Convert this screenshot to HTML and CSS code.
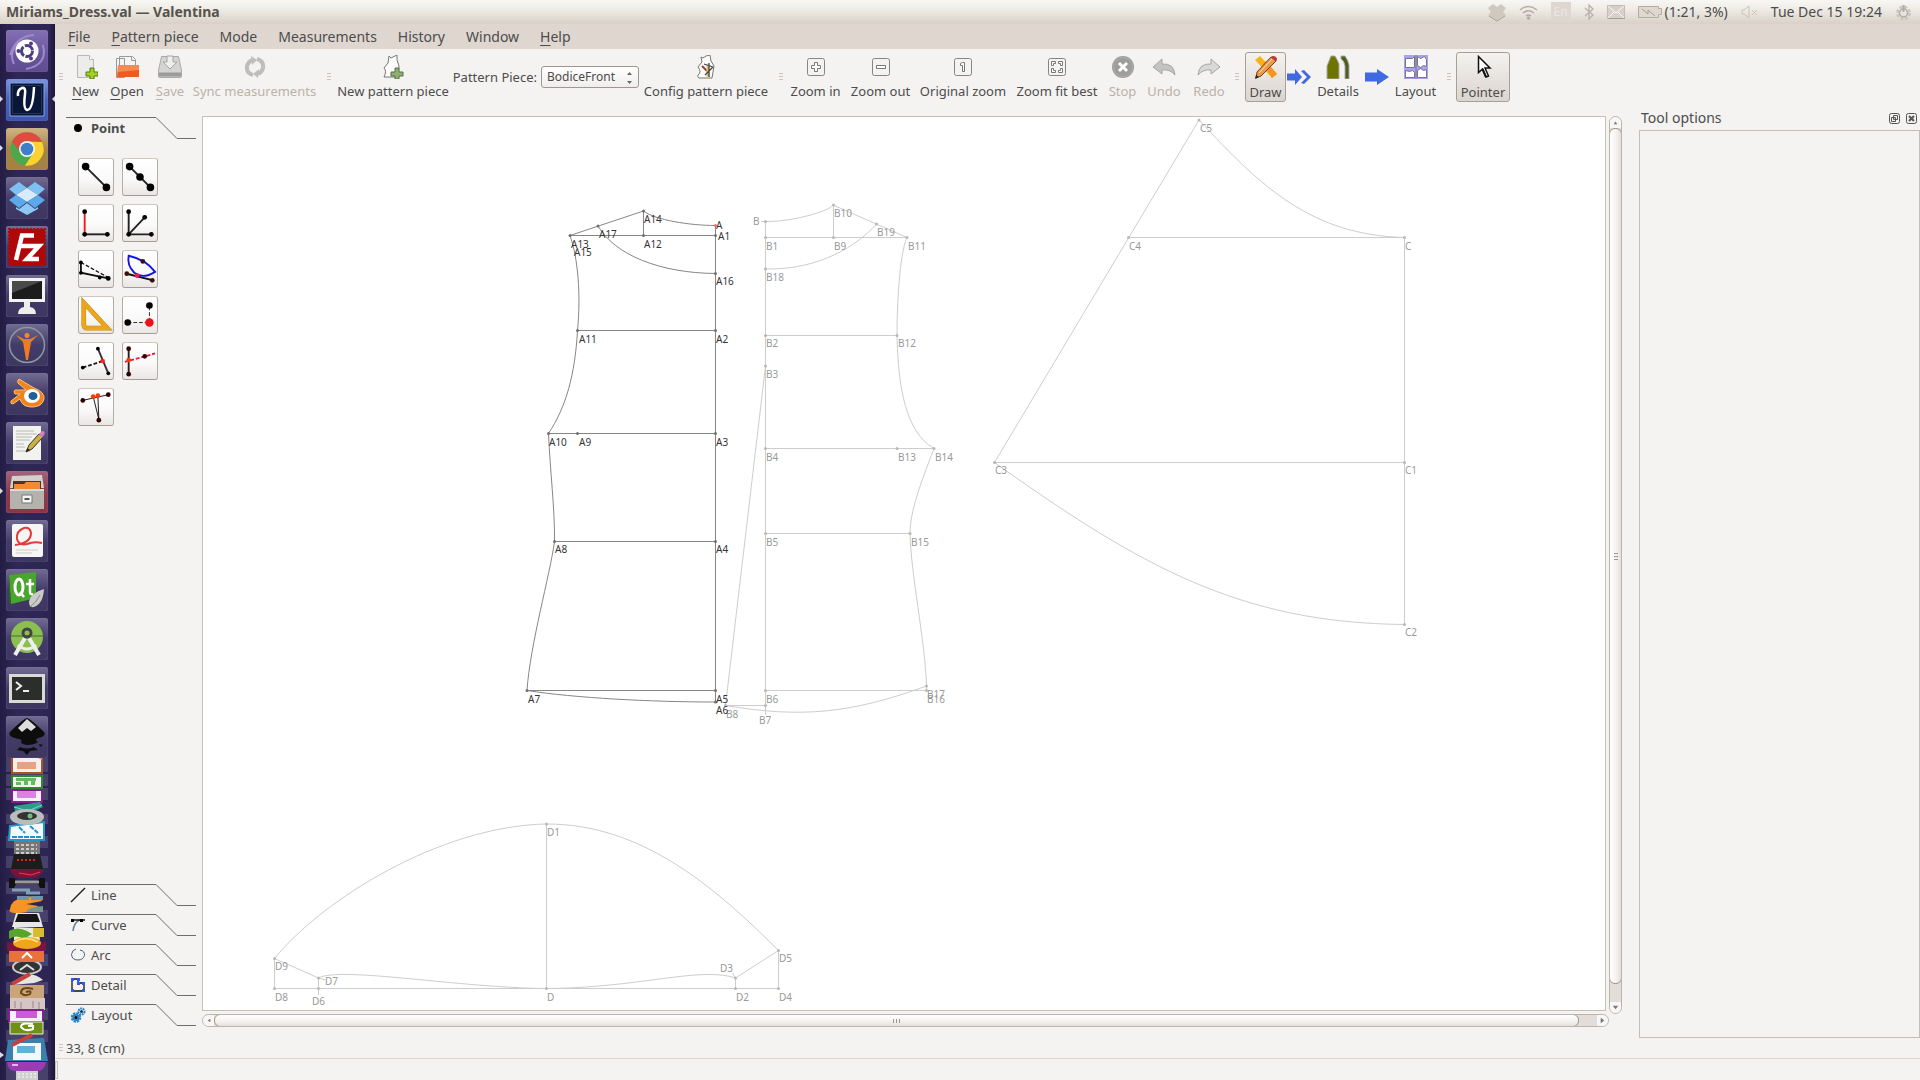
FILE: index.html
```html
<!DOCTYPE html>
<html lang="en">
<head>
<meta charset="utf-8">
<title>Miriams_Dress.val — Valentina</title>
<link rel="stylesheet" href="styles.css">
</head>
<body>
<header class="panel">
  <h1 class="panel-title">Miriams_Dress.val — Valentina</h1>
  <div class="tray">
    <svg width="18" height="20" viewBox="0 0 18 20"><path d="M5 2L0 6l3 4-3 3 6 3 3 3 3-3 6-3-3-3 3-4-5-4-4 3z" fill="#cfc9c0"/><path d="M1 14l8 5 8-5" fill="none" stroke="#a59d93"/></svg>
    <svg width="19" height="16" viewBox="0 0 19 16" fill="none" stroke="#b3aca3" stroke-width="1.5"><path d="M1 6q8.500-7 17 0M4 9q5.500-4.500 11 0M7 12q2.500-2 5 0"/><circle cx="9.500" cy="14" r="1"/></svg>
    <span class="lang">En</span>
    <svg width="10" height="18" viewBox="0 0 10 18" fill="none" stroke="#b8b1a8" stroke-width="1.300"><path d="M1 5l8 7-4 4V2l4 4-8 7"/></svg>
    <svg width="18" height="14" viewBox="0 0 18 14"><path d="M.5.5h17v13H.5z" fill="#d6d0c8" stroke="#c2bbb2"/><path d="M1 1l8 7 8-7M1 13l6-6M17 13l-6-6" fill="none" stroke="#fbfaf8"/><path d="M1 13.500h17" stroke="#a59d93"/></svg>
    <span class="battery"><svg width="24" height="14" viewBox="0 0 24 14"><path d="M.5 1.500h20v2h3v6h-3v3H.5z" fill="#ddd8d0" stroke="#b3aca3"/><path d="M4 4l6 5V5l7 6" fill="none" stroke="#a59d93"/></svg>(1:21, 3%)</span>
    <svg width="17" height="14" viewBox="0 0 17 14" fill="none" stroke="#cbc4bb"><path d="M1 5h2l5-4v12l-5-4H1zM11 5l5 5M16 5l-5 5"/></svg>
    <span class="clock">Tue Dec 15 19:24</span>
    <svg width="17" height="17" viewBox="0 0 17 17" fill="none" stroke="#b3aca3" stroke-width="1.500"><circle cx="8.500" cy="9" r="6" stroke-dasharray="3 1.700" stroke-width="3" stroke="#cdc7be"/><circle cx="8.500" cy="9" r="4"/><path d="M8.500 1v7" stroke-width="2"/></svg>
  </div>
</header>

<div class="desktop">
<nav class="launcher" aria-label="Launcher">
  <button class="tile purple" aria-label="Dash"><svg viewBox="0 0 42 42"><path d="M4 25Q10 6 28 5M8 34Q2 22 14 12M37 15Q42 35 20 39" fill="none" stroke="#9d8cc8" stroke-width="2"/><circle cx="21" cy="21" r="11.500" fill="#fff"/><circle cx="21" cy="21" r="5.500" fill="none" stroke="#4f3f82" stroke-width="3" stroke-dasharray="10 1.500"/><g fill="#4f3f82"><circle cx="12.500" cy="21" r="2"/><circle cx="25" cy="13.500" r="2"/><circle cx="25" cy="28.500" r="2"/></g></svg></button>
  <button class="tile blue run" aria-label="Valentina"><svg viewBox="0 0 42 42"><path d="M4 4h34v33H4z" fill="#0a1638" stroke="#8ba2d8"/><path d="M6.500 6.500h29v28h-29z" fill="none" stroke="#36507a" stroke-dasharray="1 1"/><path d="M12 17q-1-6 4-8 4-1 3 6-2 15 2 16 6 0 7-23" fill="none" stroke="#fff" stroke-width="2.500"/></svg></button>
  <button class="tile sand" aria-label="Chrome"><svg viewBox="0 0 42 42"><circle cx="21" cy="21" r="16.500" fill="#4ca84c"/><path d="M6 14A16.500 16.500 0 0 1 36 14L21 13.500 14.500 24z" fill="#e04b3f"/><path d="M36 14A16.500 16.500 0 0 1 19 37.500L28 24 21 13.500z" fill="#fcd22e"/><circle cx="21" cy="21" r="8" fill="#f3f3f3"/><circle cx="21" cy="21" r="6.300" fill="#3f7fc8"/></svg></button>
  <button class="tile" aria-label="Dropbox"><svg viewBox="0 0 42 42"><path d="M13 5l8 6-11 7-7-6zM29 5l-8 6 11 7 7-6z" fill="#7dc0f4"/><path d="M10 18l11-7 11 7-11 7z" fill="#d6ecfc"/><path d="M3 23l7-5 11 7-8 6zM39 23l-7-5-11 7 8 6z" fill="#5aa9ea"/><path d="M10 30l3 2 8-6 8 6 3-2v2l-11 6-11-6z" fill="#8cc8f5"/></svg></button>
  <button class="tile" aria-label="FileZilla"><svg viewBox="0 0 42 42"><path d="M3 3h36v36H3z" fill="#b00808" stroke="#b00808" stroke-width="2" stroke-dasharray="2 1.500"/><path d="M28 9.500H16L10 34M13 20h11M21 20h12L21 33h12" fill="none" stroke="#fff" stroke-width="4.500"/></svg></button>
  <button class="tile" aria-label="Remote desktop"><svg viewBox="0 0 42 42"><path d="M3 3h36v24H3z" fill="#f3f3f3"/><path d="M6 6h30v18H6z" fill="#1c1c1c"/><path d="M6 6h30L6 18z" fill="#4a4a4a"/><path d="M18 27h6v5q6 1 6 7H12q0-6 6-7z" fill="#eee"/></svg></button>
  <button class="tile" aria-label="MakeHuman"><svg viewBox="0 0 42 42"><circle cx="21" cy="21" r="17.500" fill="none" stroke="#8d97a0" stroke-width="1.500"/><circle cx="21" cy="11.500" r="2.500" fill="#f28a2c"/><path d="M10 11l8 4h6l8-4-7 7-1 6-2 12h-2l-2-12-1-6z" fill="#ee7b22"/></svg></button>
  <button class="tile" aria-label="Blender"><svg viewBox="0 0 42 42"><path d="M13 6l15 9q11 4 10 11-2 8-12 8-10 0-12-8l-7 5q-3 0-2-3l9-7H9q-2-2 0-4h11l-8-7q-1-3 1-4z" fill="#ee8420" stroke="#ffc078"/><ellipse cx="26" cy="23" rx="8" ry="7" fill="#fff"/><ellipse cx="27" cy="23" rx="4.500" ry="4" fill="#205d9c"/></svg></button>
  <button class="tile" aria-label="Text Editor"><svg viewBox="0 0 42 42"><path d="M7 4h28v34H7z" fill="#f2f2ef"/><path d="M10 9h18M10 12h21M10 15h16M10 18h14M10 22h8M10 25h9M10 29h14" stroke="#b8b8b5"/><path d="M20 30l3-7 10-11 4 3-11 12z" fill="#c9b23f" stroke="#333"/><path d="M20 30l1.500-4 2.500 2z" fill="#222"/><path d="M33 12l3-3q4 0 2 4l-2 3z" fill="#d77fc0"/></svg></button>
  <button class="tile red run-left" aria-label="Files"><svg viewBox="0 0 42 42"><path d="M6 5l30-1 2 13H4z" fill="#d4d1cd"/><path d="M7 10h28v8H7z" fill="#4c3428"/><path d="M8 13h10l2-2h14v7H8z" fill="#f08a35"/><path d="M4 18h34v20H4z" fill="#b5b2ae"/><path d="M4 18h34v2H4z" fill="#dcdad6"/><path d="M16 24h10v8H16z" fill="#f6f6f5" stroke="#777"/><path d="M18.500 28h5" stroke="#555" stroke-width="2"/></svg></button>
  <button class="tile" aria-label="Document Viewer"><svg viewBox="0 0 42 42"><rect x="6" y="4" width="31" height="33" rx="2" fill="#f6f6f4"/><path d="M9 25q16-2 16-12-1-6-7-5-8 3-7 11 2 7 10 5 7-3 15-1" fill="none" stroke="#e23a3a" stroke-width="2"/><path d="M10 30h22M10 33h16" stroke="#ccc"/></svg></button>
  <button class="tile" aria-label="Qt Creator"><svg viewBox="0 0 42 42"><path d="M3 6l27-3v26L5 35z" fill="#49a52c"/><path d="M3 6l2 29-2-3z" fill="#256813"/><ellipse cx="13" cy="18" rx="4" ry="8" fill="none" stroke="#fff" stroke-width="3"/><path d="M14 23l4 5M24 10v13q0 3 3 2M20 15h8" fill="none" stroke="#fff" stroke-width="2.500"/><path d="M38 20Q24 24 23 33q0 6 5 5 9-3 10-18z" fill="#c9cbc6"/><path d="M24 38q6-4 10-12" stroke="#8a8a88" fill="none"/></svg></button>
  <button class="tile" aria-label="Android Studio"><svg viewBox="0 0 42 42"><circle cx="21" cy="19" r="16" fill="#8bbf50"/><path d="M5 18h32" stroke="#5e8a3a" stroke-width="1.500"/><path d="M9 37l10-17M33 37L23 20" stroke="#eee" stroke-width="4"/><path d="M12 27q9 8 18 0" fill="none" stroke="#eee" stroke-width="3"/><circle cx="21" cy="15" r="4" fill="none" stroke="#444" stroke-width="3"/></svg></button>
  <button class="tile" aria-label="Terminal"><svg viewBox="0 0 42 42"><path d="M3 7h36v29H3z" fill="#d9d9d6"/><path d="M6 10h30v23H6z" fill="#2c2e2c"/><path d="M10 15l5 4-5 4M17 24h6" fill="none" stroke="#eee" stroke-width="2"/></svg></button>
  <button class="tile" aria-label="Inkscape"><svg viewBox="0 0 42 42"><path d="M21 2Q25 3 38 16q3 4-6 6-4 2 0 4-4 3-11 3-6-1-6-3 2-2-2-3-12-2-9-7Q17 3 21 2z" fill="#0d0d0d"/><path d="M21 3l9 8-5 4-4-3-5 4-4-4z" fill="#ddd"/><path d="M14 31q7 3 14 0l4 3-8 1-3 4-4-4-6-1zM33 28l4 1-3 2z" fill="#0d0d0d"/></svg></button>
  <svg class="stack" width="55" height="324" viewBox="0 0 55 324" aria-hidden="true">
    <path d="M6 2h42v14H6zM6 18h42v12H6zM6 32h42v12H6zM6 58h42v10H6zM6 80h42v12H6zM6 100h42v12H6zM6 126h42v12H6zM6 154h42v12H6zM6 198h42v12H6zM6 226h42v12H6zM6 252h42v12H6zM6 274h42v12H6zM6 306h42v18H6z" fill="#6a6488" fill-opacity=".45"/>
    <path d="M12 0h30v17H12z" fill="#f3f0ec" stroke="#a0552c" stroke-width="2"/><path d="M17 6h19v7H17z" fill="#e8a184"/><path d="M32-1l10 5v-5z" fill="#d88e5a"/>
    <path d="M12 20h30v12H12z" fill="#f2f4f0" stroke="#2b8a2b" stroke-width="2"/><path d="M16 22h20v3H16zM16 26h5v3h-5zM24 25h4v4h-4zM31 24h4v5h-4z" fill="#65b865"/>
    <path d="M12 34h30v12H12z" fill="#f7effa" stroke="#831e8c" stroke-width="2"/><path d="M17 35h19v7H17z" fill="#d883df"/>
    <path d="M14 50l26-4 3 5-15 7-13-3z" fill="#2f9a8a"/><path d="M14 51l14 4 14-6" stroke="#7dd5cb" fill="none"/>
    <path d="M10 70l34-4v18H9z" fill="#f4fafd" stroke="#2696c8" stroke-width="2"/><path d="M19 71l6 6M30 70l8 7M12 81h30" stroke="#268fd0" stroke-width="2" stroke-dasharray="5 1"/>
    <ellipse cx="27" cy="61" rx="17" ry="8" fill="#b8bcbb"/><ellipse cx="27" cy="60" rx="10" ry="4" fill="#333"/><circle cx="30" cy="60" r="2.500" fill="#70bd82"/>
    <g transform="translate(0 -10)">
      <path d="M14 95h26v17H14z" fill="#777"/><path d="M16 99h21M16 103h21M16 107h21" stroke="#ccc" stroke-width="2" stroke-dasharray="3 2"/>
      <path d="M10 123h34q-2 10-17 9-15 1-17-9z" fill="#7d1238"/><path d="M19 127l12 2 9-3" stroke="#d45" fill="none"/>
      <path d="M14 108h26l3 15H11z" fill="#1c1c1c"/><path d="M17 114h18" stroke="#d22" stroke-width="2" stroke-dasharray="2 2"/>
      <path d="M9 132h5l3 3h20l3-3h5v10h-5l-2-4H16l-2 4H9z" fill="#111"/><path d="M15 136h24" stroke="#999" stroke-width="3"/>
    </g>
    <g transform="translate(0 -17)">
      <path d="M12 151h18M26 154h14" stroke="#7da0b5" stroke-width="3"/><path d="M10 170q2-12 16-10 0-4 14-2l2 4q-10 2-16 3l12 2q-2 7-24 7-6-1-4-4z" fill="#f59527"/><path d="M17 159h12M31 159h12" stroke="#6f94aa" stroke-width="4"/><path d="M26 173q2-5 17-6v6z" fill="#76958c"/>
      <path d="M12 188l4-14h23l4 14z" fill="#e8e8e8"/><path d="M18 175h19l3 8H15z" fill="#151515"/>
      <path d="M14 188l24 1 2 12H14z" fill="#eceadf"/><path d="M9 192q8-5 18 0l5 3-8 5q-8-5-15 0z" fill="#57a52c"/><path d="M33 189h11v9H33z" fill="#d7bb30"/>
      <path d="M7 212h39v-10l-5 2H12l-5-1z" fill="#7a1440"/><ellipse cx="27" cy="204" rx="14" ry="6" fill="#f0a51b"/><path d="M14 203q12-7 24 0" stroke="#ffe07a" fill="none" stroke-width="2"/>
      <ellipse cx="27" cy="228" rx="14" ry="7" fill="#333" stroke="#ccc" stroke-width="2"/><path d="M20 231l7-5 7 5" fill="none" stroke="#ddd" stroke-width="2"/>
      <path d="M9 212h35v11H9z" fill="#e9713a"/><path d="M22 219l5-5 5 5" fill="none" stroke="#fff" stroke-width="2"/>
      <path d="M12 246q15-18 31-5l-9 3z" fill="#e6e6e2"/><path d="M12 245l18-10" stroke="#c9403a" stroke-width="4"/>
      <path d="M10 246h34v14H10z" fill="#c9a577"/><path d="M33 250q-12-3-12 4 4 4 9 1 2-4-4-2" fill="none" stroke="#6d4521" stroke-width="2"/>
      <path d="M10 259h35v12H10z" fill="#d6c5c5"/><path d="M15 262v7M21 263v7M33 262v7M39 263v7" stroke="#9a8585"/>
      <path d="M9 271h34v12H9z" fill="#f7effa" stroke="#831e8c" stroke-width="2"/><path d="M16 272h21v7H16z" fill="#cc5cd6"/>
      <path d="M10 283h33v12H10z" fill="#6f8f15" stroke="#e9efda"/><path d="M33 285q-12-2-12 3 4 5 12 2v-3h-5" fill="none" stroke="#fff" stroke-width="2"/>
      <path d="M8 301l36-2 4 23H5z" fill="#3c7fae"/><path d="M13 304h28v17H13z" fill="#f1f7fa"/><path d="M17 307h18v7H17z" fill="#62b2d8"/><path d="M12 306l20-10" stroke="#c9403a" stroke-width="4"/>
    </g>
    <path d="M7 306h39q-2 9-8 9H15q-7 0-8-9z" fill="#9c3cb4"/><path d="M12 309h6" stroke="#e4b5ee" stroke-width="2"/>
    <path d="M16 315h22v9H16z" fill="#cfcfcf"/><path d="M18 318h18M18 321h18" stroke="#fff" stroke-dasharray="2 2"/>
    <path d="M0 296l4 3-4 3z" fill="#dddbe4"/>
  </svg>
</nav>

<div class="window">
  <nav class="menubar" aria-label="Menu">
    <button><u>F</u>ile</button><button><u>P</u>attern piece</button><button>Mode</button><button>Measurements</button><button>History</button><button>Window</button><button><u>H</u>elp</button>
  </nav>

  <div class="toolbar">
    <i class="grip"></i>
    <button class="tool"><svg viewBox="0 0 24 24"><path d="M3.500.5h12l4 4v18h-16z" fill="#ececea" stroke="#b9b9b5"/><path d="M15.500.5v4h4" fill="#fff" stroke="#b9b9b5"/><path d="M16 13h4v4h4v4h-4v3h-4v-3h-4v-4h4z" fill="#a2cf28" stroke="#4c7a10"/></svg><span><u>N</u>ew</span></button>
    <button class="tool"><svg viewBox="0 0 24 24"><path d="M1.500 3.500h8v19h-8zM4.500 1.500h13l3 3v10h-16z" fill="#f4f4f2" stroke="#999"/><path d="M16.500 1.500v4h4" fill="none" stroke="#999"/><path d="M3 10h21v12H2z" fill="#ee5a22"/><path d="M3 10h21v5L3 17z" fill="#f68a52"/></svg><span><u>O</u>pen</span></button>
    <button class="tool off"><svg viewBox="0 0 24 24"><path d="M3.500 1.500h17l3 14v6q0 1-1 1h-21q-1 0-1-1v-6z" fill="#d4d4d2" stroke="#a9a9a6"/><path d="M1 17.500h22v4H1z" fill="#9b9b99"/><path d="M9 1h6v6h4l-7 7-7-7h4z" fill="#eee" stroke="#a4a4a2"/></svg><span><u>S</u>ave</span></button>
    <button class="tool off"><svg viewBox="0 0 24 24" fill="none" stroke="#bdbdbb" stroke-width="4"><path d="M10 20Q3 18 4 11q1-4 5-6M14 4q7 2 6 9-1 4-5 6"/><path d="M8 1l6 4-5 5zM16 14l-6 5 5 4z" fill="#bdbdbb" stroke="none"/></svg><span>Sync measurements</span></button>
    <i class="grip"></i>
    <button class="tool"><svg viewBox="0 0 24 24"><path d="M8 1l2 2 4-2 2-1v5l2 6-1 11H3q3-6 0-9l4-5z" fill="#fdfdfd" stroke="#777"/><path d="M14 13h4v4h4v4h-4v3h-4v-3h-4v-4h4z" fill="#8fae74" stroke="#557040"/></svg><span>New pattern piece</span></button>
    <label class="combo-label" for="piece">Pattern Piece:</label>
    <div class="combo"><select id="piece"><option>BodiceFront</option></select><svg width="7" height="12" viewBox="0 0 7 12" fill="#666"><path d="M3.500 0L6 3H1zM3.500 12L1 9h5z"/></svg></div>
    <button class="tool"><svg viewBox="0 0 24 24"><path d="M7 2l2 1 3-2 4-1 1 6 3 5-2 12H5q-2-1-1-3 4-3 0-8l4-5z" fill="#fcfcfc" stroke="#777"/><path d="M8 11l5 5" stroke="#a33a30" stroke-width="2"/><path d="M14 10v13" stroke="#d5c47a" stroke-width="3"/><path d="M10 9l9 3M19 12l-8 8M15 8v14" stroke="#444" stroke-width="1.300"/></svg><span>Config pattern piece</span></button>
    <i class="grip"></i>
    <button class="tool"><svg viewBox="0 0 24 24"><rect class="plate" x="3.500" y="3.500" width="17" height="17" rx="2"/><path d="M10.500 7.500h3v3h3v3h-3v3h-3v-3h-3v-3h3z" fill="#fff" stroke="#777"/></svg><span>Zoom in</span></button>
    <button class="tool"><svg viewBox="0 0 24 24"><rect class="plate" x="3.500" y="3.500" width="17" height="17" rx="2"/><path d="M7.500 10.500h9v3h-9z" fill="#fff" stroke="#777"/></svg><span>Zoom out</span></button>
    <button class="tool"><svg viewBox="0 0 24 24"><rect class="plate" x="3.500" y="3.500" width="17" height="17" rx="2"/><path d="M9.500 10.500v-2l2-1h2v9h-2v-6z" fill="#fff" stroke="#777"/></svg><span>Original zoom</span></button>
    <button class="tool"><svg viewBox="0 0 24 24"><rect class="plate" x="3.500" y="3.500" width="17" height="17" rx="2"/><path d="M6.500 10.500v-4h4v2h-2v2zM13.500 6.500h4v4h-2v-2h-2zM17.500 13.500v4h-4v-2h2v-2zM10.500 17.500h-4v-4h2v2h2z" fill="#fff" stroke="#777"/></svg><span>Zoom fit best</span></button>
    <button class="tool off"><svg viewBox="0 0 24 24"><circle cx="12" cy="12" r="11" fill="#9d9d9b"/><circle cx="12" cy="12" r="9.500" fill="none" stroke="#adadab"/><path d="M8 8l8 8M16 8l-8 8" stroke="#fff" stroke-width="3"/></svg><span>Stop</span></button>
    <button class="tool off"><svg viewBox="0 0 24 24"><path d="M1 12l9-8v5q12-1 13 11-5-6-13-5v4z" fill="#c4c4c2" stroke="#a5a5a3"/></svg><span>Undo</span></button>
    <button class="tool off"><svg viewBox="0 0 24 24"><path d="M23 12l-9-8v5Q2 8 1 20q5-6 13-5v4z" fill="#d8d8d6" stroke="#a5a5a3"/></svg><span>Redo</span></button>
    <i class="grip"></i>
    <button class="tool pressed"><svg viewBox="0 0 24 24"><path d="M1 5l5-4 17 18-5 4z" fill="#fbb21a"/><path d="M9 9l3-3 11 13-5 4z" fill="#f7931e"/><path d="M17 2l5 4L7 21l-5 2 1-6z" fill="#e99a4c" stroke="#7a3d14"/><path d="M5 18L18 4" stroke="#ffe0ae"/><path d="M17 2q2-2 5 0 2 3 0 4z" fill="#c8303c"/><path d="M1 24l1-4 3 2z" fill="#222"/></svg><span>Draw</span></button>
    <svg class="arrow" viewBox="0 0 24 16" fill="#4169e1"><path d="M0 4.500h8V0l7 8-7 8v-4.500H0zM14 2l6 6-6 6 3 1 7-7-7-7z"/></svg>
    <button class="tool"><svg viewBox="0 0 24 24"><path d="M1 24V11q2-5 4-10h4q3 5 4 8v15z" fill="#6d7500" stroke="#aaa"/><path d="M15 1h4q3 4 4 9v14h-4V11q-1-6-4-7z" fill="#4f5c1c" stroke="#aaa"/></svg><span>Details</span></button>
    <svg class="arrow" viewBox="0 0 24 16" fill="#4169e1"><path d="M0 3.500h12V0l12 8-12 8v-3.500H0z"/></svg>
    <button class="tool"><svg viewBox="0 0 24 24"><path d="M0 0h24v24H0z" fill="#a9a0f7"/><path d="M1.500 3.500h7l2-2v11h-9zM13.500 1.500l3 2 4-2 2 3v7l-3-1-3 2-3-2zM1.500 15.500l4 1 3-1 2 2v5h-9v-3zM13.500 15.500l3-2 3 2 3-1v8h-9z" fill="#fff" stroke="#777"/><path d="M12 0v24" stroke="#777"/></svg><span>Layout</span></button>
    <i class="grip"></i>
    <button class="tool pressed"><svg viewBox="0 0 24 24"><path d="M7.500 1.500v16l4-3.500 3.500 8 2.500-1-3.500-8h5z" fill="#fff" stroke="#111" stroke-width="1.500"/><path d="M11.500 14l3.500 8" stroke="#111" stroke-width="2"/></svg><span>Pointer</span></button>
  </div>

  <div class="work">
    <aside class="toolbox">
      <button class="tab current"><svg class="edge" viewBox="0 0 130 22"><path d="M0 .5h90l21 21h19"/></svg><svg class="mini" viewBox="0 0 14 14"><circle cx="7" cy="7" r="4"/></svg><span>Point</span></button>
      <div class="tools">
        <button aria-label="Point at distance and angle"><svg viewBox="0 0 36 36"><path d="M7 7l22 22" stroke="#222" stroke-width="2"/><circle cx="7" cy="7" r="4"/><circle cx="29" cy="29" r="4"/></svg></button>
        <button aria-label="Point along line"><svg viewBox="0 0 36 36"><path d="M7 7l22 22" stroke="#222" stroke-width="2"/><circle cx="7" cy="7" r="4"/><circle cx="18" cy="18" r="4"/><circle cx="29" cy="29" r="4"/></svg></button>
        <button aria-label="Perpendicular point"><svg viewBox="0 0 36 36"><path d="M6 30h25" stroke="#222" stroke-width="2"/><path d="M6 30V7" stroke="#f01818" stroke-width="2"/><circle cx="6" cy="6" r="2.500"/><circle cx="6" cy="30" r="2.500"/><circle cx="30" cy="30" r="2.500"/></svg></button>
        <button aria-label="Bisector point"><svg viewBox="0 0 36 36"><path d="M6 6v24h25M6 30l17-18" fill="none" stroke="#222" stroke-width="2"/><circle cx="6" cy="6" r="2.500"/><circle cx="6" cy="30" r="2.500"/><circle cx="30" cy="30" r="2.500"/><circle cx="23" cy="12" r="2.500"/></svg></button>
        <button aria-label="Shoulder point"><svg viewBox="0 0 36 36"><path d="M2 11v11l29 6" fill="none" stroke="#111" stroke-width="2"/><path d="M2 11l29 16" stroke="#111" stroke-width="1.300" stroke-dasharray="4 2"/><circle cx="2" cy="11" r="2"/><circle cx="2" cy="22" r="2"/><circle cx="22" cy="27" r="2"/><circle cx="31" cy="28" r="2.500"/></svg></button>
        <button aria-label="Point of contact"><svg viewBox="0 0 36 36"><path d="M4 23l28 7" stroke="#111" stroke-width="2"/><path d="M6 4q18 4 28 17-13 8-22 1Q4 14 6 4z" fill="none" stroke="#1414e6" stroke-width="2"/><g fill="#3d1010"><circle cx="4" cy="23" r="2.500"/><circle cx="21" cy="10" r="2.500"/><circle cx="31" cy="30" r="2.500"/></g><circle cx="15" cy="25" r="2.500" fill="#f14"/></svg></button>
        <button aria-label="Triangle"><svg viewBox="0 0 36 36"><path d="M5 5v23q0 4 4 4h21z" fill="none" stroke="#c98708" stroke-width="5"/><path d="M5 5v23q0 4 4 4h21z" fill="none" stroke="#eaa61c" stroke-width="4"/></svg></button>
        <button aria-label="Point from X and Y"><svg viewBox="0 0 36 36"><path d="M5 26h23V9" fill="none" stroke="#222" stroke-dasharray="4 2"/><circle cx="5" cy="26" r="3.500"/><circle cx="28" cy="8" r="3.500"/><circle cx="28" cy="26" r="4.500" fill="#f0101c"/></svg></button>
        <button aria-label="Point of intersection"><svg viewBox="0 0 36 36"><path d="M4 25l21-7" stroke="#222" stroke-width="2" stroke-dasharray="4 2"/><path d="M20 5l11 26" stroke="#333" stroke-width="2"/><circle cx="4" cy="25" r="2"/><circle cx="20" cy="5" r="2"/><circle cx="31" cy="31" r="2"/><circle cx="25" cy="18" r="2.500" fill="#f22"/></svg></button>
        <button aria-label="Line and axis"><svg viewBox="0 0 36 36"><path d="M2 19l32-9" stroke="#f0144a" stroke-width="2" stroke-dasharray="4 2"/><path d="M6 5v27" stroke="#222" stroke-width="2"/><g fill="#300"><circle cx="6" cy="5" r="2.500"/><circle cx="6" cy="32" r="2.500"/><circle cx="23" cy="13" r="2.500"/></g><circle cx="6" cy="17" r="2.500" fill="#f73a08"/></svg></button>
        <button aria-label="True darts"><svg viewBox="0 0 36 36"><path d="M4 11l27-6M15 7l6 24L20 6" fill="none" stroke="#111"/><g fill="#300"><circle cx="4" cy="11" r="2.500"/><circle cx="31" cy="5" r="2.500"/><circle cx="21" cy="32" r="2.500"/></g><g fill="#fb3a08"><circle cx="15" cy="7" r="2.500"/><circle cx="20" cy="6" r="2.500"/></g></svg></button>
      </div>
      <button class="tab"><svg class="edge" viewBox="0 0 130 22"><path d="M0 .5h90l21 21h19"/></svg><svg class="mini" viewBox="0 0 14 14"><path d="M0 14L14 0" stroke="#222" stroke-width="1.500"/></svg><span>Line</span></button>
      <button class="tab"><svg class="edge" viewBox="0 0 130 22"><path d="M0 .5h90l21 21h19"/></svg><svg class="mini" viewBox="0 0 14 14"><path d="M2 13q1-9 7-11" fill="none" stroke="#67809a" stroke-width="1.500"/><path d="M1 2h13" stroke="#111" stroke-width="1.500"/><path d="M0 1h3v3H0zM9 1h3v3H9z"/></svg><span>Curve</span></button>
      <button class="tab"><svg class="edge" viewBox="0 0 130 22"><path d="M0 .5h90l21 21h19"/></svg><svg class="mini" viewBox="0 0 14 14"><path d="M9 2q5 1 4.500 5.500Q12 12 7 12 1 12 .5 6.500 1 2 5 1" fill="none" stroke="#466080"/></svg><span>Arc</span></button>
      <button class="tab"><svg class="edge" viewBox="0 0 130 22"><path d="M0 .5h90l21 21h19"/></svg><svg class="mini" viewBox="0 0 14 14"><path d="M1 1h6v4h6v8H1z" fill="none" stroke="#111" stroke-width="1.300"/><path d="M0 0h3v3H0zM6 0h3v3H6zM6 4h3v3H6zM11 4h3v3h-3zM0 11h3v3H0zM11 11h3v3h-3z" fill="#2a5ee8"/></svg><span>Detail</span></button>
      <button class="tab"><svg class="edge" viewBox="0 0 130 22"><path d="M0 .5h90l21 21h19"/></svg><svg class="mini" viewBox="0 0 14 14"><g fill="none" stroke="#2583cc"><circle cx="5" cy="9.500" r="4" stroke-width="2.500" stroke-dasharray="2.200 .9"/><circle cx="5" cy="9.500" r="2.500" stroke-width="2"/><circle cx="10.500" cy="3.500" r="3" stroke-width="2" stroke-dasharray="1.800 .7"/></g><circle cx="5" cy="9.500" r="1.500"/><circle cx="10.500" cy="3.500" r="1.500" fill="#234"/></svg><span>Layout</span></button>
    </aside>

    <main class="scene">
      <svg class="draft" width="100%" height="100%" role="img" aria-label="Pattern draft">
        <g transform="translate(-203 -117)">
          <g class="piece">
            <path class="ln" d="M765.500 221.500V715M765.500 237.500H907M833.500 205V237.500M833 205L907 237.500M765.500 335.500H897M765.500 448.500H934M765.500 533.500H910M765.500 690.500H926.500V686M765.500 366L725.500 705.500H765M761 221.500h4"/>
            <path class="ln" d="M765.500 221.500C790 222 828 212 833 205M876.500 224C858 245 820 270 765.500 269M907 237.500C899 255 897 310 897 335.500C898 385 905 432 934 448.500C920 485 910 512 910 533.500C911 575 925 640 926.500 686M725.500 705.500C800 718 850 714 926.500 686"/>
            <path class="dots" d="M765.500 221.500h0M765.500 237.500h0M765.500 269h0M765.500 335.500h0M765.500 366h0M765.500 448.500h0M765.500 533.500h0M765.500 690.500h0M765.500 705.500h0M725.500 705.500h0M833.500 205h0M833.500 237.500h0M876.500 224h0M907 237.500h0M897 335.500h0M897 448.500h0M934 448.500h0M910 533.500h0M926.500 686h0M926.500 690.500h0"/>
            <text x="753" y="225">B</text><text x="766" y="250">B1</text><text x="766" y="281">B18</text><text x="766" y="347">B2</text><text x="766" y="378">B3</text><text x="766" y="461">B4</text><text x="766" y="546">B5</text><text x="766" y="703">B6</text><text x="759" y="724">B7</text><text x="726" y="718">B8</text><text x="834" y="217">B10</text><text x="834" y="250">B9</text><text x="877" y="236">B19</text><text x="908" y="250">B11</text><text x="898" y="347">B12</text><text x="898" y="461">B13</text><text x="935" y="461">B14</text><text x="911" y="546">B15</text><text x="927" y="698">B17</text><text x="927" y="703">B16</text>
          </g>
          <g class="piece">
            <path class="ln" d="M1199 120L994.500 462.500H1404.500M1128.500 237.500H1404.500V624.500M1199 120C1262 188 1312 235 1404.500 237.500M994.500 462.500C1140 566 1240 623 1404.500 624.500"/>
            <path class="dots" d="M1199 120h0M1128.500 237.500h0M1404.500 237.500h0M1404.500 462.500h0M994.500 462.500h0M1404.500 624.500h0"/>
            <text x="1200" y="132">C5</text><text x="1129" y="250">C4</text><text x="1405" y="250">C</text><text x="1405" y="474">C1</text><text x="995" y="474">C3</text><text x="1405" y="636">C2</text>
          </g>
          <g class="piece">
            <path class="ln" d="M274.500 988.500H778.500V950.500L735.500 978V988.500M274.500 988.500V958.500L318.500 978V995M546.500 988.500V824M318.500 978l7 2M735.500 978l-3-5"/>
            <path class="ln" d="M274.500 958.500C322 900 440 826 546.500 824C640 824 712 884 778.500 950.500M318.500 978C340 966 460 988 546.500 988.500C640 988 700 966 735.500 978"/>
            <path class="dots" d="M274.500 988.500h0M274.500 958.500h0M318.500 978h0M318.500 988.500h0M546.500 988.500h0M546.500 824h0M735.500 978h0M735.500 988.500h0M778.500 988.500h0M778.500 950.500h0"/>
            <text x="547" y="836">D1</text><text x="547" y="1001">D</text><text x="275" y="970">D9</text><text x="275" y="1001">D8</text><text x="325" y="985">D7</text><text x="312" y="1005">D6</text><text x="720" y="972">D3</text><text x="736" y="1001">D2</text><text x="779" y="962">D5</text><text x="779" y="1001">D4</text>
          </g>
          <g class="piece active">
            <path class="ln" d="M715.500 225.500V702M570 235.500H715.500M570 235.500L643.500 211V235.500M577.500 330.500H715.500M548.500 433.500H715.500M554.500 541.500H715.500M527 690.500H715.500"/>
            <path class="ln" d="M643.500 211C655 220 690 225.500 715.500 225.500M598 226C615 255 660 273 715.500 273.500M570 235.500C578 258 581 295 577.500 330.500C575 375 566 407 548.500 433.500C550 470 555 510 554.500 541.500C550 575 530 645 527 690.500C575 698 650 702 715.500 702"/>
            <path class="dots" d="M715.500 235.500h0M715.500 273.500h0M715.500 330.500h0M715.500 433.500h0M715.500 541.500h0M715.500 690.500h0M715.500 702h0M643.500 211h0M643.500 235.500h0M598 226h0M570 235.500h0M577.500 330.500h0M548.500 433.500h0M577.500 433.500h0M554.500 541.500h0M527 690.500h0"/>
            <path class="dots origin" d="M715.500 225.500h0"/>
            <text x="716" y="229">A</text><text x="718" y="240">A1</text><text x="716" y="285">A16</text><text x="716" y="343">A2</text><text x="716" y="446">A3</text><text x="716" y="553">A4</text><text x="716" y="703">A5</text><text x="716" y="714">A6</text><text x="644" y="223">A14</text><text x="644" y="248">A12</text><text x="599" y="238">A17</text><text x="571" y="248">A13</text><text x="574" y="256">A15</text><text x="579" y="343">A11</text><text x="549" y="446">A10</text><text x="579" y="446">A9</text><text x="555" y="553">A8</text><text x="528" y="703">A7</text>
          </g>
        </g>
      </svg>
      <div class="bar vertical">
        <button aria-label="Scroll up"><svg viewBox="0 0 12 12"><path d="M6 5l2 3H4z"/></svg></button>
        <div class="track"><div class="thumb"><i></i></div></div>
        <button aria-label="Scroll down"><svg viewBox="0 0 12 12"><path d="M3 4h6L6 8z"/></svg></button>
      </div>
      <div class="bar horizontal">
        <button aria-label="Scroll left"><svg viewBox="0 0 12 12"><path d="M8 4v4L5 6z"/></svg></button>
        <div class="track"><div class="thumb"><i></i></div></div>
        <button aria-label="Scroll right"><svg viewBox="0 0 12 12"><path d="M4 3v6l4-3z"/></svg></button>
      </div>
    </main>

    <aside class="dock">
      <header><h2>Tool options</h2>
        <button aria-label="Float"><svg viewBox="0 0 11 11"><rect x=".5" y=".5" width="10" height="10" rx="2"/><path d="M4.500 2.500h4v4h-4zM2.500 4.500h4v4h-4z"/></svg></button>
        <button aria-label="Close"><svg viewBox="0 0 11 11"><rect x=".5" y=".5" width="10" height="10" rx="2"/><path d="M3 3l5 5M8 3L3 8" stroke-width="2"/></svg></button>
      </header>
      <div class="dock-body"></div>
    </aside>
  </div>

  <div class="coords"><i class="grip"></i><span>33, 8 (cm)</span></div>
  <footer class="status"><i></i></footer>
</div>
</div>
</body>
</html>
```
FILE: styles.css
```css
* { box-sizing: border-box; }
body {
  margin: 0;
  height: 100vh;
  display: flex;
  flex-direction: column;
  overflow: hidden;
  background: #f4f3f1;
  color: #4c4c4c;
  font: 13px/18px "Noto Sans", "Open Sans", sans-serif;
}
button { border: 0; padding: 0; margin: 0; background: none; color: inherit; font: inherit; }
svg { display: block; flex: none; }
u { text-underline-offset: 3px; }

.panel {
  flex: none;
  height: 24px;
  display: flex;
  justify-content: space-between;
  align-items: center;
  padding: 0 8px 0 6px;
  background: linear-gradient(#f8f7f4, #f0ede8 35%, #d9d0c6);
  font-size: 14px;
}
.panel-title { margin: 0; font-size: 14px; font-weight: 700; color: #57534c; }
.tray { display: flex; align-items: center; gap: 13px; white-space: nowrap; }
.lang { width: 20px; height: 20px; background: #ddd7cf; color: #ebe7e2; text-align: center; font-size: 12px; line-height: 20px; }
.battery { display: flex; align-items: center; gap: 3px; }

.desktop { flex: 1; min-height: 0; display: flex; }

.launcher {
  flex: none;
  width: 55px;
  display: flex;
  flex-direction: column;
  align-items: flex-start;
  gap: 7px;
  padding-top: 6px;
  overflow: hidden;
  background: linear-gradient(90deg, #231d45, #2f2756 30%, #2d2554 90%, #1c1738);
}
.tile {
  position: relative;
  flex: none;
  width: 42px;
  height: 42px;
  margin-left: 6px;
  border-radius: 3px;
  background: linear-gradient(#716c91, #433c69 50%, #3d3660);
  box-shadow: inset 0 0 1px #9e99b5;
}
.tile svg { width: 42px; height: 42px; }
.tile.purple { background: linear-gradient(#8470b4, #67549c 60%, #5f4c92); }
.tile.blue { background: linear-gradient(#7a94dd, #4763bc 50%, #3b56ad); }
.tile.sand { background: linear-gradient(#d0b585, #a58547 50%, #a38243); }
.tile.red { background: linear-gradient(#a2647c, #873c50 50%, #8c3444); }
.tile.run::before, .tile.run-left::before, .tile.sand::before {
  content: "";
  position: absolute;
  left: -6px;
  top: 17px;
  border: 3px solid transparent;
  border-left-color: #dddbe4;
  border-right-width: 0;
}
.tile.run::after {
  content: "";
  position: absolute;
  right: -7px;
  top: 17px;
  border: 3px solid transparent;
  border-right-color: #dddbe4;
  border-left-width: 0;
}
.stack { margin-top: -9px; }

.window { flex: 1; min-width: 0; display: flex; flex-direction: column; }
.menubar {
  flex: none;
  height: 25px;
  display: flex;
  align-items: center;
  gap: 21px;
  padding-left: 13px;
  background: #dfd6d0;
  font-size: 14px;
}

.toolbar {
  flex: none;
  height: 57px;
  padding-top: 3px;
  display: grid;
  grid-template-columns: 12px 37px 46px 40px 129px 19px 110px 93px 98px 134px 16px 53px 77px 88px 100px 31px 52px 38px 17px 41px 26px 52px 26px 51px 15px 54px;
  grid-template-rows: 50px;
  align-items: center;
  justify-items: center;
  white-space: nowrap;
}
.grip {
  width: 4px;
  height: 8px;
  background: repeating-linear-gradient(#cbc5be 0 1px, transparent 1px 3px);
}
.tool {
  width: 100%;
  height: 50px;
  display: flex;
  flex-direction: column;
  align-items: center;
  gap: 3px;
  padding-top: 3px;
}
.tool svg { width: 24px; height: 24px; }
.tool.off { color: #bcb1a7; }
.tool.pressed {
  border: 1px solid #a89f95;
  border-radius: 3px;
  gap: 4px;
  padding-top: 2px;
  background: linear-gradient(#f4f2f0, #e5e0db 60%, #dbd5d0);
}
.plate { fill: #f3f3f1; stroke: #858583; }
.arrow { width: 24px; height: 16px; }
.combo-label { justify-self: end; padding-right: 4px; }
.combo { position: relative; width: 98px; height: 22px; }
.combo select {
  appearance: none;
  width: 98px;
  height: 22px;
  padding: 0 5px;
  border: 1px solid #a0978e;
  border-radius: 3px;
  background: linear-gradient(#fff, #f0eeec);
  color: inherit;
  font: inherit;
  font-size: 12px;
}
.combo svg { position: absolute; right: 6px; top: 6px; pointer-events: none; }

.work { flex: 1; min-height: 0; display: flex; }
.toolbox {
  flex: none;
  width: 147px;
  padding: 11px 6px 4px 11px;
  display: flex;
  flex-direction: column;
}
.tab {
  position: relative;
  flex: none;
  height: 30px;
  display: flex;
  align-items: center;
  gap: 6px;
  padding: 0 0 8px 5px;
}
.tab .edge { position: absolute; left: 0; top: 0; width: 130px; height: 22px; fill: none; stroke: #6d6d6d; }
.tab .mini { width: 14px; height: 14px; overflow: visible; }
.tab.current { font-weight: 700; }
.tools {
  flex: 1;
  display: grid;
  grid-template-columns: 36px 36px;
  grid-auto-rows: 38px;
  gap: 8px;
  align-content: start;
  padding: 11px 0 0 12px;
}
.tools button {
  display: grid;
  place-items: center;
  border: 1px solid #b0a79d;
  border-color: #cfc7be #b5ada4 #a59c92;
  border-radius: 3px;
  background: linear-gradient(#fff, #fbfafa 55%, #e9e6e4);
}
.tools svg { width: 34px; height: 36px; }

.scene {
  flex: 1;
  min-width: 0;
  display: grid;
  grid-template-columns: 1fr 13px;
  grid-template-rows: 1fr 13px;
  gap: 3px;
  padding: 10px 0 11px;
}
.draft { min-height: 0; border: 1px solid #c8bfb5; background: #fff; overflow: hidden; }
.piece { fill: #999; font-size: 10px; }
.ln { fill: none; stroke: #cdcdcd; }
.dots { fill: none; stroke: #b8b8b8; stroke-width: 3; stroke-linecap: round; }
.active { fill: #333; }
.active .ln { stroke: #868686; }
.active .dots { stroke: #707070; }
.active .origin { stroke: #f06a6a; }

.bar { display: flex; border: 1px solid #bdb4aa; border-radius: 7px; background: #e2ddd8; overflow: hidden; }
.bar button { flex: none; width: 11px; height: 11px; background: #f8f7f6; }
.bar svg { width: 11px; height: 11px; fill: #777; }
.vertical { flex-direction: column; margin-bottom: -3px; }
.horizontal { grid-row: 2; margin-right: -3px; }
.track { flex: 1; display: flex; background: #e2ddd8; }
.thumb {
  flex: 1;
  display: grid;
  place-items: center;
  border: 1px solid #a09788;
  border-radius: 6px;
}
.vertical .thumb { margin: 0 -1px 18px; background: linear-gradient(90deg, #fff, #f6f4f2 50%, #e5e0dd); }
.horizontal .thumb { margin: -1px 18px -1px 0; background: linear-gradient(#fff, #f6f4f2 50%, #e5e0dd); }
.vertical i { width: 4px; height: 7px; background: repeating-linear-gradient(#9c948a 0 1px, transparent 1px 3px); }
.horizontal i { width: 7px; height: 4px; background: repeating-linear-gradient(90deg, #9c948a 0 1px, transparent 1px 3px); }

.dock { flex: none; width: 281px; margin-left: 17px; display: flex; flex-direction: column; }
.dock header { flex: none; height: 24px; display: flex; align-items: center; gap: 6px; padding: 0 3px 0 2px; }
.dock h2 { flex: 1; margin: 0; font-size: 14px; font-weight: 400; }
.dock header svg { width: 11px; height: 11px; fill: none; stroke: #555; }
.dock-body { flex: 1; border: 1px solid #c6beb6; }

.coords { flex: none; height: 20px; display: flex; align-items: center; gap: 3px; padding-left: 4px; }
.status { flex: none; height: 22px; border-top: 1px solid #dcd6cf; padding-top: 2px; }
.status i { display: block; width: 3px; height: 18px; border: 1px solid #c9c2ba; }
```
